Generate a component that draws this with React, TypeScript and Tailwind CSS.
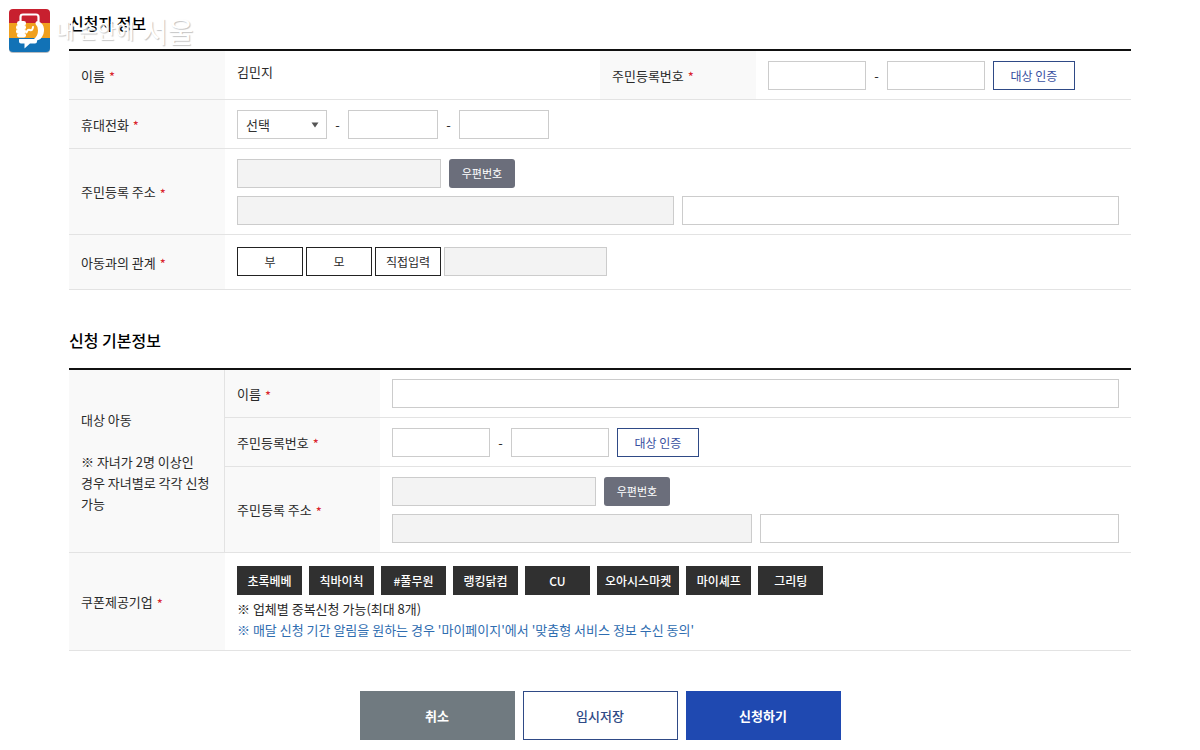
import type { ReactNode } from "react";

const VENDORS = [
  "초록베베",
  "칙바이칙",
  "#풀무원",
  "랭킹닭컴",
  "CU",
  "오아시스마켓",
  "마이셰프",
  "그리팅",
];

const RELATIONS = ["부", "모", "직접입력"];

const FIELD =
  "h-[29px] border border-[#cccccc] bg-white px-2 text-[13px] text-[#333333] disabled:bg-[#f3f3f3]";
const TH =
  "border-b border-[#e3e3e3] bg-[#f9f9f9] px-3 text-left align-middle font-normal";
const TD = "border-b border-[#e3e3e3] px-3 pt-[10px] pb-[9px] align-top";
const TABLE =
  "w-full table-fixed border-separate border-spacing-0 border-t-2 border-[#111111]";

function Required({ htmlFor, children }: { htmlFor?: string; children: ReactNode }) {
  return (
    <label htmlFor={htmlFor} className="flex items-center gap-1">
      {children}
      <span className="pt-1 leading-4 text-[#d9242c]">*</span>
    </label>
  );
}

function Dash() {
  return <span className="w-[21px] text-center">-</span>;
}

function ResidentNumber({ id }: { id: string }) {
  return (
    <div className="flex items-center">
      <input id={id} className={`${FIELD} w-[98px]`} />
      <Dash />
      <input aria-label="주민등록번호 뒷자리" className={`${FIELD} w-[98px]`} />
      <button
        type="button"
        className="ml-2 h-[29px] w-[82px] border border-[#2f4a86] text-xs text-[#3850a0]"
      >
        대상 인증
      </button>
    </div>
  );
}

function Address({ id }: { id: string }) {
  return (
    <div className="flex flex-col gap-2">
      <div className="flex gap-2">
        <input id={id} disabled className={`${FIELD} w-[204px]`} />
        <button
          type="button"
          className="h-[29px] w-[66px] rounded-[3px] bg-[#6b6e7b] text-[11px] text-white"
        >
          우편번호
        </button>
      </div>
      <div className="flex gap-2">
        <input aria-label="기본 주소" disabled className={`${FIELD} min-w-0 flex-1`} />
        <input aria-label="상세 주소" className={`${FIELD} min-w-0 flex-1`} />
      </div>
    </div>
  );
}

function Logo() {
  return (
    <div className="pointer-events-none absolute top-2 left-2 flex items-center">
      <svg width="44" height="46" viewBox="0 0 44 46" aria-hidden="true">
        <defs>
          <clipPath id="tile">
            <rect x="1" y="1" width="41" height="43" rx="4" />
          </clipPath>
        </defs>
        <rect x="1" y="2" width="41" height="43" rx="4" fill="#b9bcc0" />
        <g clipPath="url(#tile)">
          <rect width="44" height="15" fill="#c8202f" />
          <rect y="15" width="44" height="15" fill="#f0a01e" />
          <rect y="30" width="44" height="16" fill="#1272b6" />
        </g>
        {/* phone */}
        <path
          d="M12.5 14V9q0-2.5 2.5-2.5h13q2.5 0 2.5 2.5v5"
          fill="none"
          stroke="#fff"
          strokeWidth="2.2"
        />
        {/* left fist */}
        <g fill="#fff">
          <rect x="9" y="13" width="9" height="4.6" rx="2.2" />
          <rect x="8" y="17" width="10" height="4.6" rx="2.2" />
          <rect x="8" y="21" width="10" height="4.6" rx="2.2" />
          <rect x="9" y="25" width="9" height="4.4" rx="2.2" />
          <rect x="11" y="14" width="5" height="14" />
        </g>
        {/* right hand */}
        <path
          d="M29 13q5 1 6.500 5.500q1.500 5-1 9.500q-1.500 3.500-5.500 4.500l-3-1.500q4-3 4-8.500q0-4-2.500-6.500q-0.500-2 1.500-3z"
          fill="#fff"
        />
        {/* speech bubble */}
        <path d="M11 31h18v2.500q0 2-2 2h-5l-5.500 5v-5H13q-2 0-2-2z" fill="#fff" />
        <path
          d="M18.500 24.500q1-3.500 3.500-2.500t3-3"
          fill="none"
          stroke="#fff"
          strokeWidth="2"
          strokeLinecap="round"
        />
      </svg>
      <span className="ml-1 flex items-center gap-2 text-xl leading-8 text-white [text-shadow:1px_1px_1px_#c4c4c4]">
        내 손안에 <span className="text-[28px]">서울</span>
      </span>
    </div>
  );
}

export default function App() {
  return (
    <div className="relative min-h-screen bg-white font-['Noto_Sans_CJK_KR',sans-serif] text-[13px] leading-[21px] break-keep text-[#2a2a2a]">
      <form className="px-[69px] pt-[11px] pb-[10px]">
        <section>
          <h2 className="pb-[14px] text-base leading-6 font-medium text-black">
            신청자 정보
          </h2>
          <table className={TABLE}>
            <colgroup>
              <col className="w-[156px]" />
              <col />
              <col className="w-[156px]" />
              <col />
            </colgroup>
            <tbody>
              <tr>
                <th scope="row" className={TH}>
                  <Required>이름</Required>
                </th>
                <td className={TD}>김민지</td>
                <th scope="row" className={TH}>
                  <Required htmlFor="resident">주민등록번호</Required>
                </th>
                <td className={TD}>
                  <ResidentNumber id="resident" />
                </td>
              </tr>
              <tr>
                <th scope="row" className={TH}>
                  <Required htmlFor="phone">휴대전화</Required>
                </th>
                <td colSpan={3} className={TD}>
                  <div className="flex items-center">
                    <div className="relative">
                      <select
                        id="phone"
                        className={`${FIELD} block w-[90px] appearance-none`}
                      >
                        <option>선택</option>
                      </select>
                      <svg
                        width="8"
                        height="6"
                        viewBox="0 0 8 6"
                        className="pointer-events-none absolute top-3 right-2"
                        aria-hidden="true"
                      >
                        <path d="M0.5 0.5h7L4 5.5z" fill="#555" />
                      </svg>
                    </div>
                    <Dash />
                    <input aria-label="휴대전화 중간자리" className={`${FIELD} w-[90px]`} />
                    <Dash />
                    <input aria-label="휴대전화 끝자리" className={`${FIELD} w-[90px]`} />
                  </div>
                </td>
              </tr>
              <tr>
                <th scope="row" className={TH}>
                  <Required htmlFor="address">주민등록 주소</Required>
                </th>
                <td colSpan={3} className={TD}>
                  <Address id="address" />
                </td>
              </tr>
              <tr>
                <th scope="row" className={TH}>
                  <Required htmlFor="relation">아동과의 관계</Required>
                </th>
                <td
                  colSpan={3}
                  className="border-b border-[#e3e3e3] px-3 pt-3 pb-[13px]"
                >
                  <div className="flex gap-[3px]">
                    {RELATIONS.map((name) => (
                      <button
                        key={name}
                        type="button"
                        className="h-[29px] w-[66px] border border-[#222222] text-xs"
                      >
                        {name}
                      </button>
                    ))}
                    <input id="relation" disabled className={`${FIELD} w-[163px]`} />
                  </div>
                </td>
              </tr>
            </tbody>
          </table>
        </section>

        <section className="mt-[38px]">
          <h2 className="pb-4 text-base leading-6 font-medium text-black">
            신청 기본정보
          </h2>
          <table className={TABLE}>
            <colgroup>
              <col className="w-[156px]" />
              <col className="w-[155px]" />
              <col />
            </colgroup>
            <tbody>
              <tr>
                <th scope="rowgroup" rowSpan={3} className={`${TH} border-r`}>
                  대상 아동
                  <br />
                  <br />※ 자녀가 2명 이상인
                  <br />
                  경우 자녀별로 각각 신청 가능
                </th>
                <th scope="row" className={TH}>
                  <Required htmlFor="child-name">이름</Required>
                </th>
                <td className="border-b border-[#e3e3e3] px-3 py-[9px]">
                  <input id="child-name" className={`${FIELD} block w-full`} />
                </td>
              </tr>
              <tr>
                <th scope="row" className={TH}>
                  <Required htmlFor="child-resident">주민등록번호</Required>
                </th>
                <td className={TD}>
                  <ResidentNumber id="child-resident" />
                </td>
              </tr>
              <tr>
                <th scope="row" className={TH}>
                  <Required htmlFor="child-address">주민등록 주소</Required>
                </th>
                <td className={TD}>
                  <Address id="child-address" />
                </td>
              </tr>
              <tr>
                <th scope="row" className={TH}>
                  <Required>쿠폰제공기업</Required>
                </th>
                <td
                  colSpan={2}
                  className="border-b border-[#e3e3e3] px-3 pt-[13px] pb-[10px]"
                >
                  <div className="mb-[3px] flex flex-wrap gap-[7px]">
                    {VENDORS.map((name) => (
                      <button
                        key={name}
                        type="button"
                        className="h-[29px] min-w-[65px] bg-[#303030] px-2 text-xs font-medium text-white"
                      >
                        {name}
                      </button>
                    ))}
                  </div>
                  <p>※ 업체별 중복신청 가능(최대 8개)</p>
                  <p className="text-[#2f6db0]">
                    ※ 매달 신청 기간 알림을 원하는 경우 '마이페이지'에서 '맞춤형
                    서비스 정보 수신 동의'
                  </p>
                </td>
              </tr>
            </tbody>
          </table>
        </section>

        <div className="mt-10 flex justify-center gap-2">
          <button
            type="button"
            className="h-[49px] w-[155px] bg-[#707a80] font-bold text-white"
          >
            취소
          </button>
          <button
            type="button"
            className="h-[49px] w-[155px] border border-[#2f4a86] font-medium text-[#2f4a86]"
          >
            임시저장
          </button>
          <button
            type="submit"
            className="h-[49px] w-[155px] bg-[#1f49b1] font-bold text-white"
          >
            신청하기
          </button>
        </div>
      </form>
      <Logo />
    </div>
  );
}
